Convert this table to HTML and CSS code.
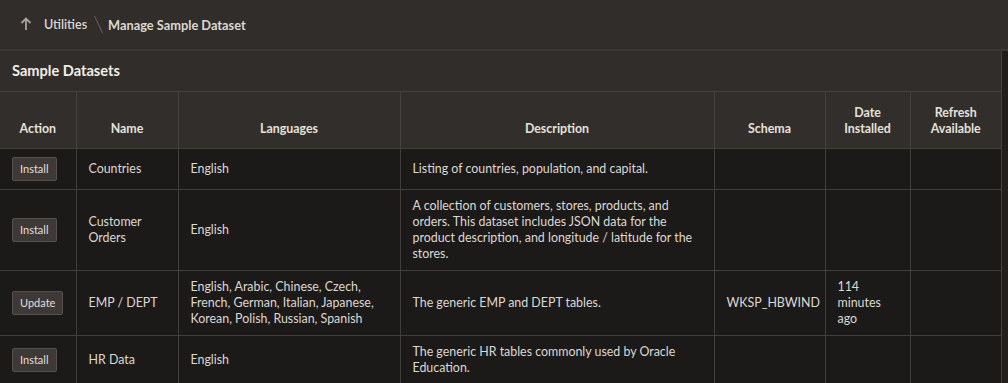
FILE: index.html
```html
<!DOCTYPE html>
<html>
<head>
<meta charset="utf-8">
<link rel="stylesheet" href="styles.css">
</head>
<body>
<header class="topbar">
  <nav class="crumbs">
    <svg class="up" width="12" height="14" viewBox="0 0 12 14"><path d="M6 1.5 L6 13 M1.5 6 L6 1.5 L10.5 6" fill="none" stroke="#a8a29c" stroke-width="1.8"/></svg>
    <a class="crumb">Utilities</a>
    <span class="sep"></span>
    <span class="crumb current">Manage Sample Dataset</span>
  </nav>
</header>
<div class="main">
  <section class="region">
    <h2 class="region-title">Sample Datasets</h2>
    <table class="grid">
      <colgroup>
        <col class="c-action"><col class="c-name"><col class="c-lang"><col class="c-desc"><col class="c-schema"><col class="c-date"><col class="c-refresh">
      </colgroup>
      <thead>
        <tr>
          <th>Action</th><th>Name</th><th>Languages</th><th>Description</th><th>Schema</th><th>Date<br>Installed</th><th>Refresh<br>Available</th>
        </tr>
      </thead>
      <tbody>
        <tr>
          <td><button class="btn">Install</button></td>
          <td>Countries</td>
          <td>English</td>
          <td>Listing of countries, population, and capital.</td>
          <td></td><td></td><td></td>
        </tr>
        <tr>
          <td><button class="btn">Install</button></td>
          <td>Customer<br>Orders</td>
          <td>English</td>
          <td>A collection of customers, stores, products, and orders. This dataset includes JSON data for the product description, and longitude / latitude for the stores.</td>
          <td></td><td></td><td></td>
        </tr>
        <tr>
          <td><button class="btn">Update</button></td>
          <td>EMP / DEPT</td>
          <td>English, Arabic, Chinese, Czech, French, German, Italian, Japanese, Korean, Polish, Russian, Spanish</td>
          <td>The generic EMP and DEPT tables.</td>
          <td>WKSP_HBWIND</td>
          <td>114<br>minutes<br>ago</td>
          <td></td>
        </tr>
        <tr>
          <td><button class="btn">Install</button></td>
          <td>HR Data</td>
          <td>English</td>
          <td>The generic HR tables commonly used by Oracle Education.</td>
          <td></td><td></td><td></td>
        </tr>
      </tbody>
    </table>
  </section>
  <div class="scroll-strip"></div>
</div>
</body>
</html>
```

FILE: styles.css
```css
html, body {
  margin: 0;
  padding: 0;
}
body {
  background: #1c1a18;
  font-family: Lato, "Open Sans", "Liberation Sans", sans-serif;
  font-size: 12.4px;
  color: #ddd8d3;
  overflow: hidden;
}
.topbar {
  height: 49px;
  background: #312d2a;
  border-bottom: 2px solid #3c3835;
  display: flex;
  align-items: center;
  padding-left: 20px;
  box-sizing: content-box;
}
.crumbs {
  display: flex;
  align-items: center;
}
.up {
  margin-right: 12px;
  margin-top: -1px;
}
.crumb {
  font-weight: 600;
  color: #ddd7d1;
  font-size: 12.5px;
}
.crumb.current {
  font-weight: 700;
  font-size: 12.8px;
}
.sep {
  width: 1px;
  height: 17px;
  background: #6a6561;
  transform: skewX(25deg);
  margin: 0 9px 0 11px;
}
.main {
  display: flex;
  align-items: stretch;
}
.region {
  width: 1001px;
  border-right: 1px solid #45413d;
  background: #1c1a18;
}
.scroll-strip {
  flex: 1;
  background: #221e1b;
}
.region-title {
  margin: 0;
  height: 40px;
  line-height: 40px;
  padding-left: 12px;
  background: #312d2a;
  border-bottom: 1px solid #45413d;
  font-size: 14.6px;
  font-weight: 700;
  color: #f1ede9;
}
.grid {
  width: 1001px;
  border-collapse: collapse;
  table-layout: fixed;
}
.c-action { width: 76px; }
.c-name { width: 102px; }
.c-lang { width: 222px; }
.c-desc { width: 314px; }
.c-schema { width: 111px; }
.c-date { width: 85px; }
.c-refresh { width: 91px; }
.grid th {
  background: #322e2b;
  color: #e6e1dc;
  font-weight: 700;
  font-size: 12.4px;
  line-height: 16px;
  height: 32px;
  padding: 13px 8px 11px;
  vertical-align: bottom;
  text-align: center;
  border-left: 1px solid #45413d;
  border-bottom: 1px solid #45413d;
}
.grid th:first-child, .grid td:first-child {
  border-left: none;
}
.grid td {
  line-height: 16px;
  padding: 8px 12px;
  vertical-align: middle;
  border-left: 1px solid #423e3b;
  border-bottom: 1px solid #423e3b;
  color: #ddd8d3;
}
.btn {
  display: block;
  height: 24px;
  padding: 0 7px;
  background: #3d3936;
  border: 1px solid #56514d;
  border-radius: 2px;
  color: #e3ded9;
  font-family: Lato, "Open Sans", "Liberation Sans", sans-serif;
  font-size: 11px;
  line-height: 22px;
  cursor: pointer;
}
```
